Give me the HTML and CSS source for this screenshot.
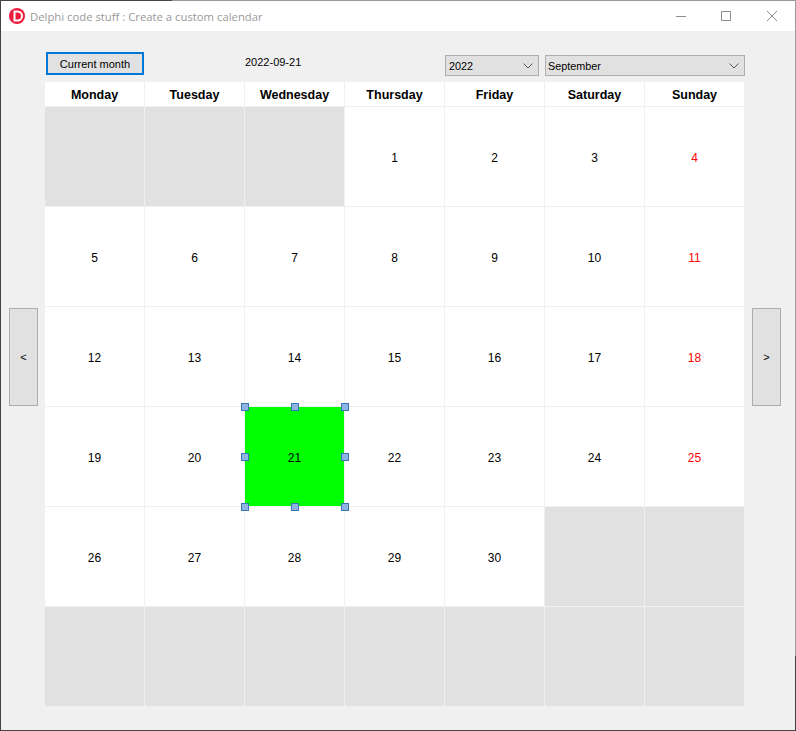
FILE: index.html
```html
<!DOCTYPE html>
<html lang="en">

<head>
    <meta charset="UTF-8">
    <title>Delphi code stuff : Create a custom calendar</title>
    <link rel="stylesheet" href="styles.css">
</head>

<body>
    <div class="window">
        <div class="titlebar">
            <svg class="app-icon" width="16" height="16" viewBox="0 0 16 16">
                <circle cx="8" cy="8" r="8" fill="#ee1c3c" />
                <path d="M5.5 3.500h3a4.500 4.500 0 0 1 0 9h-3z" fill="none" stroke="#fff" stroke-width="2" />
            </svg>
            <span class="title">Delphi code stuff : Create a custom calendar</span>
            <div class="window-buttons">
                <svg width="10" height="10" viewBox="0 0 10 10"><path d="M0 5.500h10" stroke="#8a8a8a" /></svg>
                <svg class="max" width="10" height="10" viewBox="0 0 10 10"><path d="M.5.500h9v9h-9z" fill="none" stroke="#8a8a8a" /></svg>
                <svg width="10" height="10" viewBox="0 0 10 10"><path d="M0 0l10 10M10 0L0 10" stroke="#8a8a8a" /></svg>
            </div>
        </div>

        <div class="content">
            <div class="toolbar">
                <button class="current-btn">Current month</button>
                <span class="today">2022-09-21</span>
                <div class="combo year"><span>2022</span>
                    <svg width="10" height="6" viewBox="0 0 10 6"><path d="M.5.500L5 5 9.500.500" fill="none" stroke="#555" /></svg>
                </div>
                <div class="combo month"><span>September</span>
                    <svg width="10" height="6" viewBox="0 0 10 6"><path d="M.5.500L5 5 9.500.500" fill="none" stroke="#555" /></svg>
                </div>
            </div>

            <div class="main">
                <button class="nav-btn">&lt;</button>

                <div class="calendar">
                    <div class="head">Monday</div>
                    <div class="head">Tuesday</div>
                    <div class="head">Wednesday</div>
                    <div class="head">Thursday</div>
                    <div class="head">Friday</div>
                    <div class="head">Saturday</div>
                    <div class="head">Sunday</div>

                    <div class="day off"></div>
                    <div class="day off"></div>
                    <div class="day off"></div>
                    <div class="day">1</div>
                    <div class="day">2</div>
                    <div class="day">3</div>
                    <div class="day sunday">4</div>

                    <div class="day">5</div>
                    <div class="day">6</div>
                    <div class="day">7</div>
                    <div class="day">8</div>
                    <div class="day">9</div>
                    <div class="day">10</div>
                    <div class="day sunday">11</div>

                    <div class="day">12</div>
                    <div class="day">13</div>
                    <div class="day">14</div>
                    <div class="day">15</div>
                    <div class="day">16</div>
                    <div class="day">17</div>
                    <div class="day sunday">18</div>

                    <div class="day">19</div>
                    <div class="day">20</div>
                    <div class="day selected">21
                        <i class="grip tl"></i><i class="grip tc"></i><i class="grip tr"></i>
                        <i class="grip ml"></i><i class="grip mr"></i>
                        <i class="grip bl"></i><i class="grip bc"></i><i class="grip br"></i>
                    </div>
                    <div class="day">22</div>
                    <div class="day">23</div>
                    <div class="day">24</div>
                    <div class="day sunday">25</div>

                    <div class="day">26</div>
                    <div class="day">27</div>
                    <div class="day">28</div>
                    <div class="day">29</div>
                    <div class="day">30</div>
                    <div class="day off"></div>
                    <div class="day off"></div>

                    <div class="day off"></div>
                    <div class="day off"></div>
                    <div class="day off"></div>
                    <div class="day off"></div>
                    <div class="day off"></div>
                    <div class="day off"></div>
                    <div class="day off"></div>
                </div>

                <button class="nav-btn next">&gt;</button>
            </div>
        </div>
    </div>
</body>

</html>
```

FILE: styles.css
```css
html,
body {
    height: 100%;
}

body {
    margin: 0;
    font-family: "Liberation Sans", Arial, sans-serif;
    font-size: 12px;
    color: #000;
    background-color: #f0f0f0;
}

.window {
    position: relative;
    box-sizing: border-box;
    height: 731px;
    border: 1px solid #9a9a9a;
    border-left-color: #444;
    border-bottom-color: #444;
    background-color: #f0f0f0;
}

/* desktop behind the window shows on the edge */
.window::before {
    content: "";
    position: absolute;
    top: -1px;
    left: -1px;
    width: 172px;
    height: 1px;
    background-color: #444;
}

.window::after {
    content: "";
    position: absolute;
    right: -1px;
    bottom: -1px;
    width: 1px;
    height: 75px;
    background-color: #444;
}

.titlebar {
    display: flex;
    align-items: center;
    height: 30px;
    padding-left: 8px;
    background-color: #fff;
}

.title {
    margin-left: 5px;
    font-family: "Open Sans", sans-serif;
    font-size: 11.3px;
    color: #999;
}

.window-buttons {
    display: flex;
    gap: 35px;
    margin-left: auto;
    margin-right: 18px;
    margin-bottom: 1px;
}

.window-buttons .max {
    margin-right: 1px;
}

.toolbar {
    display: flex;
    align-items: flex-start;
    height: 51px;
    padding: 21px 0 0 45px;
    box-sizing: border-box;
}

.current-btn {
    width: 98px;
    height: 23px;
    padding: 0;
    border: 2px solid #0078d7;
    background-color: #e1e1e1;
    font-family: inherit;
    font-size: 11px;
}

.today {
    width: 200px;
    margin: 4px 0 0 101px;
    font-size: 11px;
}

.combo {
    display: flex;
    align-items: center;
    justify-content: space-between;
    box-sizing: border-box;
    height: 21px;
    margin-top: 3px;
    padding: 0 3px 0 2px;
    border: 1px solid #adadad;
    background-color: #e1e1e1;
}

.year span {
    margin-left: 1px;
}

.combo span {
    font-size: 10.8px;
}

.combo svg {
    margin-right: 2px;
}

.year {
    width: 94px;
}

.month {
    width: 200px;
    margin-left: 6px;
}

.main {
    display: flex;
    align-items: flex-start;
    padding-left: 8px;
}

.nav-btn {
    width: 29px;
    height: 98px;
    margin-top: 226px;
    padding: 0;
    border: 1px solid #adadad;
    background-color: #e1e1e1;
    font-family: inherit;
    font-size: 11px;
}

.next {
    margin-left: 1px;
}

.calendar {
    display: grid;
    grid-template-columns: repeat(7, 99px);
    grid-template-rows: 24px repeat(6, 99px);
    gap: 1px;
    margin: 0 7px;
}

.head,
.day {
    display: flex;
    align-items: center;
    justify-content: center;
    box-sizing: border-box;
    background-color: #fff;
}

.head {
    padding-top: 2px;
    font-size: 12.5px;
    font-weight: bold;
}

.day {
    position: relative;
    padding-top: 2px;
}

.off {
    background-color: #e1e1e1;
}

.sunday {
    color: #f00;
}

.selected {
    z-index: 1;
    background-color: #0f0;
}

.grip {
    position: absolute;
    box-sizing: border-box;
    width: 8px;
    height: 8px;
    border: 1px solid #3a74b0;
    background-color: #8fb4e3;
}

.tl,
.tc,
.tr {
    top: -4px;
}

.ml,
.mr {
    top: 46px;
}

.bl,
.bc,
.br {
    bottom: -5px;
}

.tl,
.ml,
.bl {
    left: -4px;
}

.tc,
.bc {
    left: 46px;
}

.tr,
.mr,
.br {
    right: -5px;
}
```
